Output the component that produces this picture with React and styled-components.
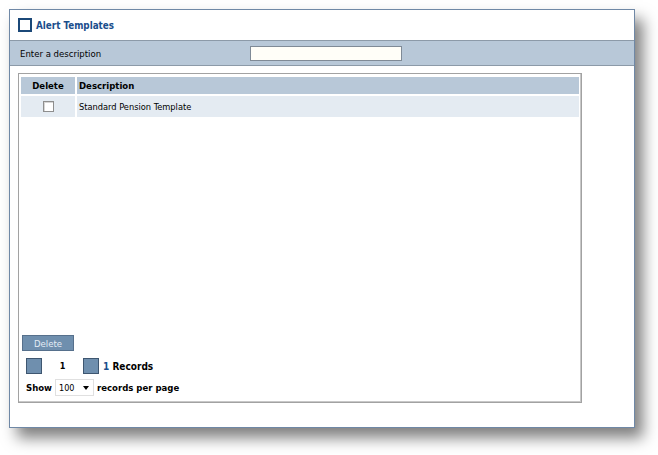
import React from "react";
import styled, { createGlobalStyle } from "styled-components";

const FONT = `"DejaVu Sans Condensed", "DejaVu Sans", Verdana, sans-serif`;

const GlobalStyle = createGlobalStyle`
  html, body {
    margin: 0;
    padding: 0;
    background: #ffffff;
  }
  body {
    font-family: ${FONT};
    font-size: 9px;
    color: #000;
  }
`;

export default function App() {
  const rows = [{ id: 1, description: "Standard Pension Template" }];

  return (
    <>
      <GlobalStyle />
      <Page>
        <Panel>
          <TitleBar>
            <TitleBox />
            <Title>Alert Templates</Title>
          </TitleBar>

          <FilterBar>
            <FilterLabel>Enter a description</FilterLabel>
            <FilterInput type="text" />
          </FilterBar>

          <Grid>
            <Table>
              <thead>
                <tr>
                  <HeadCell $narrow>Delete</HeadCell>
                  <HeadCell>Description</HeadCell>
                </tr>
              </thead>
              <tbody>
                {rows.map((r) => (
                  <tr key={r.id}>
                    <Cell $center>
                      <RowCheck type="checkbox" />
                    </Cell>
                    <Cell>{r.description}</Cell>
                  </tr>
                ))}
              </tbody>
            </Table>

            <Footer>
              <DeleteButton>Delete</DeleteButton>
              <Pager>
                <PageBox />
                <PageNum>1</PageNum>
                <PageBox />
                <Count>
                  <span>1</span> Records
                </Count>
              </Pager>
              <ShowRow>
                <b>Show</b>
                <PerPage>
                  100
                  <Caret />
                </PerPage>
                <b>records per page</b>
              </ShowRow>
            </Footer>
          </Grid>
        </Panel>
      </Page>
    </>
  );
}

const Page = styled.div`
  width: 658px;
  height: 455px;
  padding: 9px 0 0 9px;
  box-sizing: border-box;
`;

const Panel = styled.div`
  width: 626px;
  height: 419px;
  box-sizing: border-box;
  border: 1px solid #6f88a6;
  background: #ffffff;
  box-shadow: 8px 10px 14px rgba(0, 0, 0, 0.5);
  display: flex;
  flex-direction: column;
`;

const TitleBar = styled.div`
  display: flex;
  align-items: center;
  height: 30px;
  padding: 0 0 0 8px;
`;

const TitleBox = styled.span`
  width: 10px;
  height: 10px;
  border: 2px solid #1b4878;
  margin-right: 4px;
`;

const Title = styled.span`
  font-weight: bold;
  font-size: 9.8px;
  color: #1b4e8c;
`;

const FilterBar = styled.div`
  display: flex;
  align-items: center;
  height: 24px;
  background: #b8c8d8;
  border-top: 1px solid #8c9aa8;
  border-bottom: 1px solid #8c9aa8;
`;

const FilterLabel = styled.span`
  width: 230px;
  padding-left: 10px;
  font-size: 9.5px;
`;

const FilterInput = styled.input`
  width: 150px;
  height: 13px;
  padding: 0;
  margin: 0;
  border: 1px solid #7f8a96;
  background: #fffef8;
`;

const Grid = styled.div`
  width: 564px;
  height: 330px;
  margin: 7px 0 0 8px;
  box-sizing: border-box;
  border: 1px solid #a2a2a2;
  box-shadow: inset -1px -1px 0 #c8c8c8;
  padding: 3px 2px 0 2px;
  display: flex;
  flex-direction: column;
  justify-content: space-between;
`;

const Table = styled.table`
  width: 100%;
  border-collapse: separate;
  border-spacing: 0 2px;
  margin-top: -2px;
`;

const HeadCell = styled.th`
  background: #b8c8d8;
  height: 17px;
  padding: 0 2px;
  font-size: 9.5px;
  font-weight: bold;
  text-align: ${(p) => (p.$narrow ? "center" : "left")};
  width: ${(p) => (p.$narrow ? "50px" : "auto")};
  border-right: ${(p) => (p.$narrow ? "2px solid #ffffff" : "none")};
`;

const Cell = styled.td`
  background: #e4ebf2;
  height: 21px;
  padding: 0 2px;
  font-size: 9.2px;
  text-align: ${(p) => (p.$center ? "center" : "left")};
  border-right: ${(p) => (p.$center ? "2px solid #ffffff" : "none")};
`;

const RowCheck = styled.input`
  appearance: none;
  width: 11px;
  height: 11px;
  margin: 2px 0 0 0;
  border: 1px solid #8e8e8e;
  background: #ffffff;
  box-shadow: inset 1px 1px 0 #d6d6d6;
`;

const Footer = styled.div`
  display: flex;
  flex-direction: column;
  padding: 0 0 6px 1px;
`;

const DeleteButton = styled.button`
  width: 52px;
  height: 16px;
  padding: 0;
  border: 1px solid #56708c;
  background: #6f8fae;
  color: #e4ecf5;
  font-family: ${FONT};
  font-size: 9.5px;
  text-align: center;
`;

const Pager = styled.div`
  display: flex;
  align-items: center;
  height: 16px;
  margin-top: 7px;
  padding-left: 4px;
`;

const PageBox = styled.span`
  width: 14px;
  height: 14px;
  background: #6f8fae;
  border: 1px solid #3e5670;
`;

const PageNum = styled.span`
  font-weight: bold;
  width: 41px;
  text-align: center;
`;

const Count = styled.span`
  margin-left: 4px;
  font-weight: bold;
  font-size: 10px;
  span {
    color: #1b4e8c;
  }
`;

const ShowRow = styled.div`
  display: flex;
  align-items: center;
  gap: 3px;
  margin-top: 5px;
  padding-left: 4px;
  font-size: 9.5px;
`;

const PerPage = styled.span`
  display: flex;
  align-items: center;
  justify-content: space-between;
  width: 39px;
  height: 17px;
  box-sizing: border-box;
  padding: 0 4px 0 3px;
  border: 1px solid #e0e0e0;
  font-size: 9px;
`;

const Caret = styled.span`
  width: 0;
  height: 0;
  border-left: 3px solid transparent;
  border-right: 3px solid transparent;
  border-top: 4px solid #000;
`;
